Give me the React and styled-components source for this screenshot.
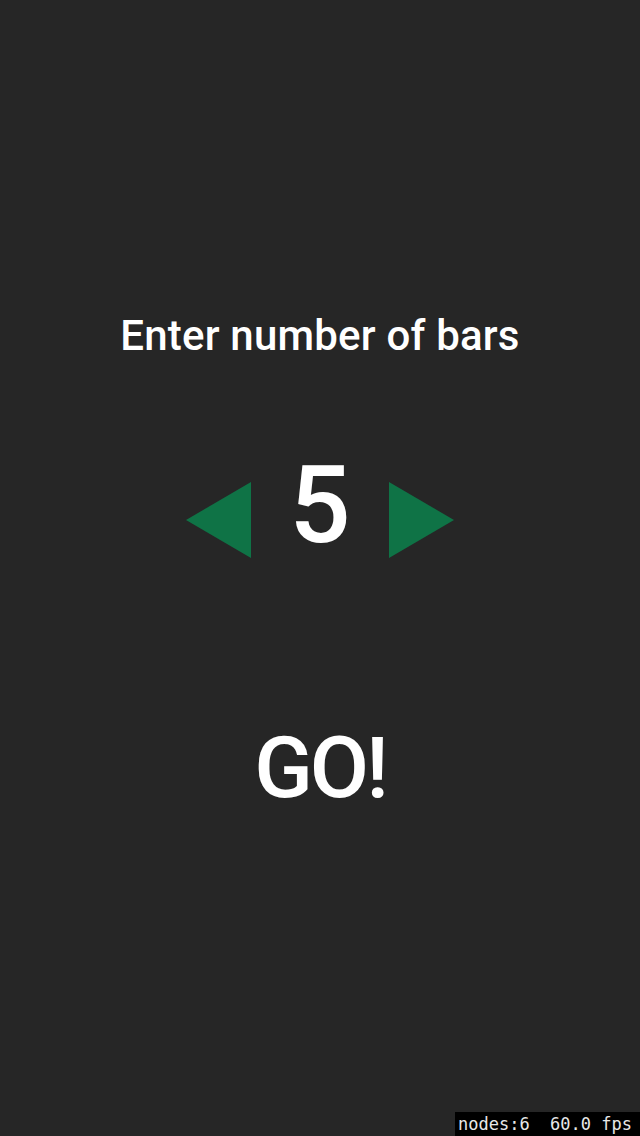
import React, { useState } from "react";
import styled, { createGlobalStyle } from "styled-components";

const GlobalStyle = createGlobalStyle`
  html, body, #root {
    margin: 0;
    height: 100%;
  }
  body {
    background: #262626;
    font-family: Roboto, "Liberation Sans", sans-serif;
  }
`;

const Screen = styled.div`
  position: relative;
  height: 1136px;
  display: flex;
  flex-direction: column;
  align-items: center;
  padding-top: 312px;
  box-sizing: border-box;
  color: #fff;
`;

const Title = styled.h1`
  margin: 0;
  font-size: 42px;
  font-weight: 500;
  line-height: 48px;
  letter-spacing: 0.2px;
`;

const Picker = styled.div`
  margin-top: 85px;
  display: flex;
  align-items: center;
  gap: 34px;
`;

const Arrow = styled.button`
  border: 0;
  padding: 0;
  background: none;
  width: 0;
  height: 0;
  border-top: 38px solid transparent;
  border-bottom: 38px solid transparent;
  ${(p) =>
    p.dir === "left"
      ? "border-right: 65px solid #0f7346;"
      : "border-left: 65px solid #0f7346;"}
`;

const Count = styled.div`
  font-size: 108px;
  font-weight: 500;
  line-height: 120px;
  padding-bottom: 30px;
  width: 70px;
  text-align: center;
`;

const Go = styled.div`
  margin-top: 123px;
  font-size: 86px;
  font-weight: 500;
  line-height: 100px;
  letter-spacing: -3px;
`;

const Stats = styled.div`
  position: absolute;
  right: 0;
  bottom: 0;
  background: #000;
  color: #e8e8e8;
  font-family: "DejaVu Sans Mono", monospace;
  font-size: 17px;
  line-height: 24px;
  padding: 0 8px 0 3px;
  white-space: pre;
`;

export default function App() {
  const [bars, setBars] = useState(5);
  return (
    <>
      <GlobalStyle />
      <Screen>
        <Title>Enter number of bars</Title>
        <Picker>
          <Arrow dir="left" onClick={() => setBars(Math.max(1, bars - 1))} />
          <Count>{bars}</Count>
          <Arrow dir="right" onClick={() => setBars(bars + 1)} />
        </Picker>
        <Go>GO!</Go>
        <Stats>{"nodes:6  60.0 fps"}</Stats>
      </Screen>
    </>
  );
}
